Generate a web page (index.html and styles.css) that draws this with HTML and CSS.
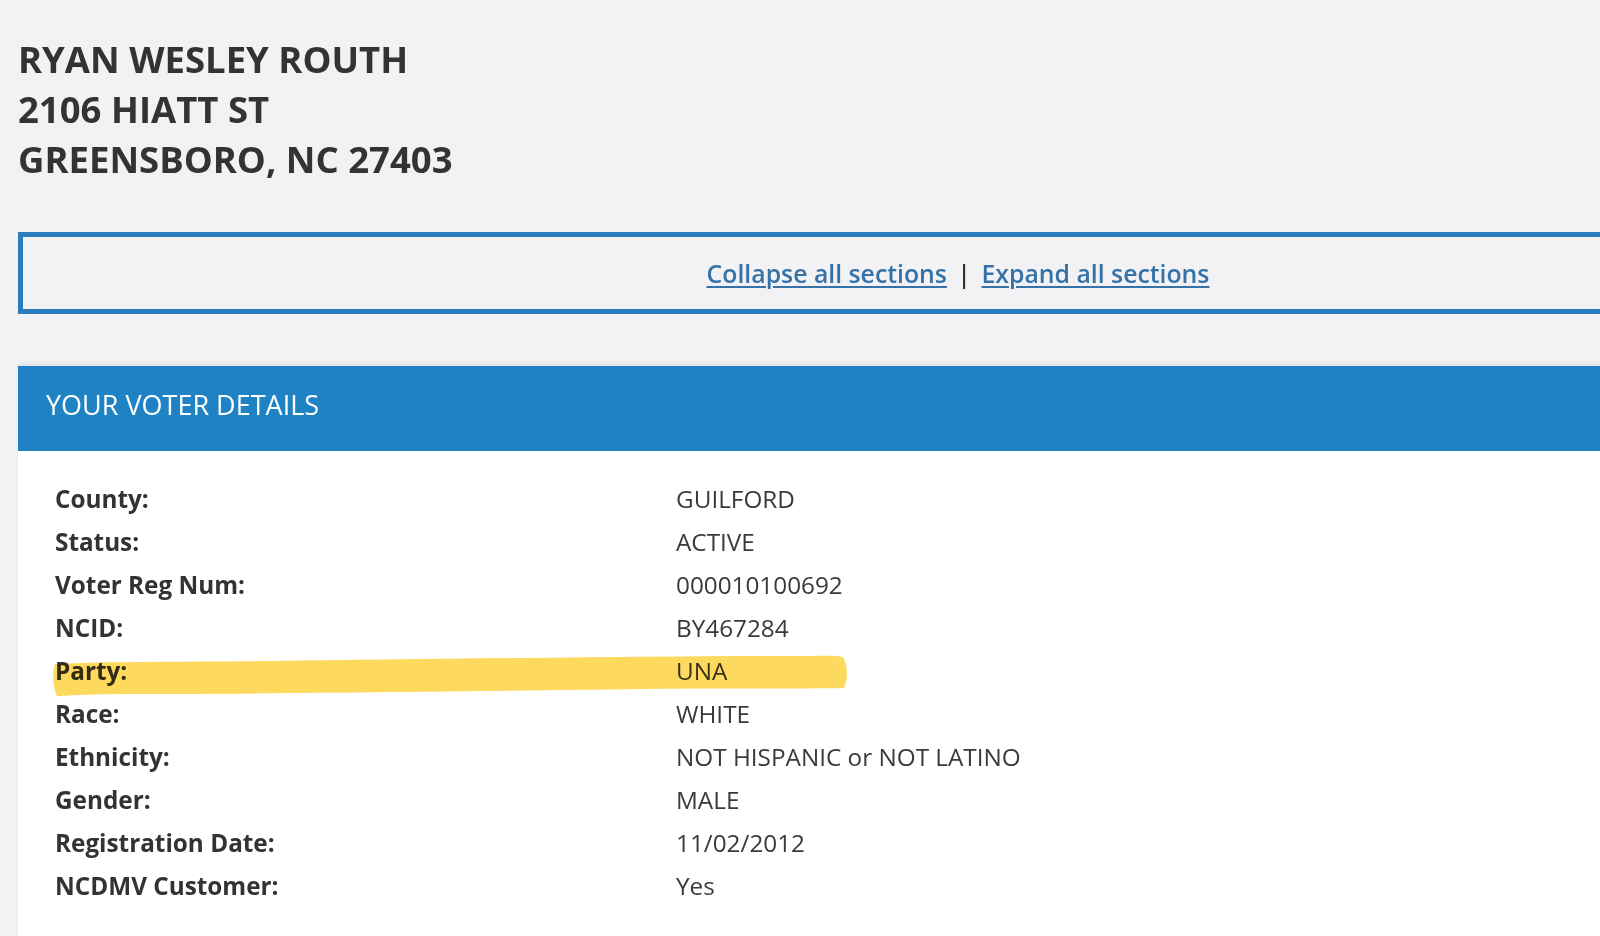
FILE: index.html
```html
<!DOCTYPE html>
<html lang="en">
<head>
<meta charset="utf-8">
<title>Voter Details</title>
<link rel="stylesheet" href="styles.css">
</head>
<body>
<div class="page">
  <div class="address">
    <div>RYAN WESLEY ROUTH</div>
    <div>2106 HIATT ST</div>
    <div>GREENSBORO, NC 27403</div>
  </div>

  <div class="toggle-box">
    <a href="#" class="toggle-link">Collapse all sections</a>
    <span class="sep">|</span>
    <a href="#" class="toggle-link">Expand all sections</a>
  </div>

  <section class="panel">
    <div class="panel-header">YOUR VOTER DETAILS</div>
    <div class="panel-body">
      <div class="details">
        <div class="label">County:</div><div class="value">GUILFORD</div>
        <div class="label">Status:</div><div class="value">ACTIVE</div>
        <div class="label">Voter Reg Num:</div><div class="value">000010100692</div>
        <div class="label">NCID:</div><div class="value">BY467284</div>
        <div class="label">Party:</div><div class="value">UNA</div>
        <div class="label">Race:</div><div class="value">WHITE</div>
        <div class="label">Ethnicity:</div><div class="value">NOT HISPANIC or NOT LATINO</div>
        <div class="label">Gender:</div><div class="value">MALE</div>
        <div class="label">Registration Date:</div><div class="value">11/02/2012</div>
        <div class="label">NCDMV Customer:</div><div class="value">Yes</div>
      </div>
      <svg class="highlight" width="800" height="46" viewBox="0 0 800 46" aria-hidden="true">
        <path d="M4 11 C 60 8, 140 9, 220 8 S 380 6, 470 5 S 640 3, 720 3 S 780 2, 792 4 C 797 12, 797 27, 793 35 C 740 36, 660 35, 590 36 S 430 38, 340 39 S 160 41, 90 41 S 20 43, 6 43 C 2 35, 1 19, 4 11 Z"/>
      </svg>
    </div>
  </section>
</div>
</body>
</html>
```

FILE: styles.css
```css
html, body {
  margin: 0;
  padding: 0;
}

body {
  background: #f2f2f4;
  font-family: "Open Sans", "Noto Sans", "Liberation Sans", sans-serif;
  color: #333333;
  overflow: hidden;
  width: 1600px;
  height: 936px;
}

.page {
  width: 1880px;
  padding-left: 18px;
  padding-top: 34px;
}

.address {
  font-size: 36.5px;
  font-weight: 700;
  line-height: 50px;
  color: #333333;
  margin-bottom: 48px;
}

.toggle-box {
  border: 5px solid #2b7cbf;
  height: 72px;
  line-height: 72px;
  text-align: center;
  font-size: 24.8px;
  font-weight: 600;
}

.toggle-link {
  color: #3572a8;
  text-decoration: underline;
  text-decoration-thickness: 2px;
  text-underline-offset: 3px;
}

.sep {
  color: #333333;
  margin: 0 4px;
}

.panel {
  margin-top: 52px;
  box-shadow: 0 -3px 2px rgba(180, 190, 200, 0.25);
}

.panel-header {
  background: #1f82c4;
  color: #ffffff;
  font-size: 27px;
  font-weight: 400;
  line-height: 36px;
  padding: 21px 28px 28px 28px;
}

.panel-body {
  position: relative;
  background: #ffffff;
  padding: 26px 0 40px 37px;
}

.details {
  display: grid;
  grid-template-columns: 621px 1fr;
  font-size: 24.3px;
  line-height: 43px;
}

.label {
  font-weight: 700;
  color: #333333;
}

.value {
  font-weight: 400;
  color: #3a3a3a;
}

.highlight {
  position: absolute;
  left: 33px;
  top: 202px;
  pointer-events: none;
  mix-blend-mode: multiply;
}

.highlight path {
  fill: #fdd95e;
}
```
